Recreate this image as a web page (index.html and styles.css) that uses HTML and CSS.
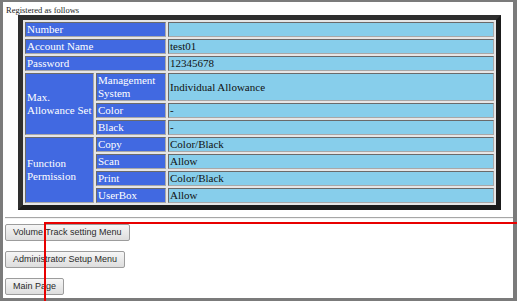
FILE: index.html
```html
<!DOCTYPE html>
<html lang="en">
<head>
  <meta charset="UTF-8" />
  <title>Registered as follows</title>
  <link rel="stylesheet" href="styles.css">
</head>
<body>
  <div class="frame">
    <p class="caption">Registered as follows</p>

    <!-- registered account -->
    <table class="info">
      <colgroup>
        <col class="c1">
        <col class="c2">
        <col>
      </colgroup>
      <tr><th colspan="2">Number</th><td></td></tr>
      <tr><th colspan="2">Account Name</th><td>test01</td></tr>
      <tr><th colspan="2">Password</th><td>12345678</td></tr>
      <tr><th rowspan="3">Max. Allowance Set</th><th>Management System</th><td>Individual Allowance</td></tr>
      <tr><th>Color</th><td>-</td></tr>
      <tr><th>Black</th><td>-</td></tr>
      <tr><th rowspan="4">Function Permission</th><th>Copy</th><td>Color/Black</td></tr>
      <tr><th>Scan</th><td>Allow</td></tr>
      <tr><th>Print</th><td>Color/Black</td></tr>
      <tr><th>UserBox</th><td>Allow</td></tr>
    </table>

    <hr class="sep" />

    <!-- menu buttons -->
    <div class="menu">
      <div class="menu-row"><button>Volume Track setting Menu</button></div>
      <div class="menu-row"><button>Administrator Setup Menu</button></div>
      <div class="menu-row"><button>Main Page</button></div>
    </div>
  </div>

  <!-- red callout line -->
  <div class="callout-h"></div>
  <div class="callout-v"></div>
</body>
</html>
```

FILE: styles.css
```css
html, body {
  margin: 0;
  padding: 0;
  background: #ffffff;
}

body {
  position: relative;
  width: 517px;
  height: 301px;
  overflow: hidden;
}

.frame {
  box-sizing: border-box;
  width: 517px;
  height: 301px;
  border-style: solid;
  border-color: #7b7b7b;
  border-width: 2px 4px 3px 3px;
  background: #ffffff;
}

.caption {
  margin: 3px 0 0 3px;
  height: 10px;
  font-family: "Liberation Serif", serif;
  font-size: 8.5px;
  line-height: 10px;
  color: #222;
}

.info {
  margin-left: 15px;
  width: 483px;
  table-layout: fixed;
  border-collapse: separate;
  border-spacing: 2px;
  border-style: solid;
  border-width: 5px;
  border-color: #2e2e2e #1b1b1b #1b1b1b #2e2e2e;
  background: #e6e6e6;
  font-family: "Liberation Serif", serif;
  font-size: 11px;
  line-height: 13px;
}

.info col.c1 {
  width: 69px;
}

.info col.c2 {
  width: 70px;
}

.info th,
.info td {
  padding: 0 1px;
  text-align: left;
  font-weight: normal;
  vertical-align: middle;
  border: 1px solid;
  border-color: #6a6a6a #a8a8a8 #a8a8a8 #6a6a6a;
  height: 13px;
}

.info th {
  background-color: #4169e1;
  color: #ffffff;
}

.info td {
  background-color: #87ceeb;
  color: #111;
}

.sep {
  height: 0;
  margin: 7px 0 0 2px;
  border: none;
  border-top: 1px solid #a6a6a6;
  border-bottom: 1px solid #f2f2f2;
}

.menu {
  padding: 5px 0 0 2px;
}

.menu-row {
  height: 17px;
  margin-bottom: 10px;
}

.menu button {
  display: block;
  box-sizing: border-box;
  height: 17px;
  margin: 0;
  padding: 0 7px;
  font-family: "Liberation Sans", Arial, sans-serif;
  font-size: 9px;
  line-height: 15px;
  color: #2a2a2a;
  background: linear-gradient(#f6f6f6, #dddddd);
  border: 1px solid #9c9c9c;
  border-radius: 2px;
}

.callout-h {
  position: absolute;
  left: 44px;
  top: 222px;
  width: 473px;
  height: 2px;
  background: #e80000;
}

.callout-v {
  position: absolute;
  left: 44px;
  top: 222px;
  width: 2px;
  height: 79px;
  background: #e80000;
}
```
